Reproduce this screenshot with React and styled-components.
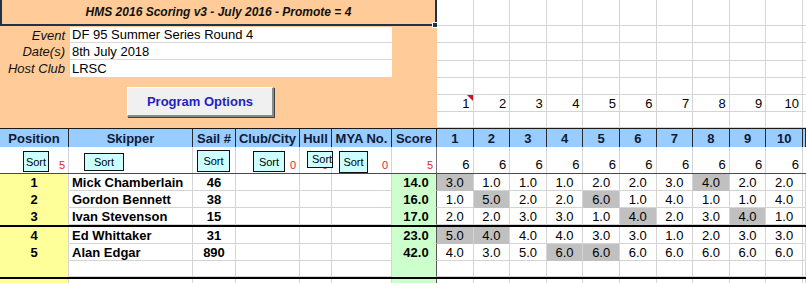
import React from 'react';
import styled, { createGlobalStyle } from 'styled-components';

const GlobalStyle = createGlobalStyle`
  html, body { margin: 0; padding: 0; background: #fff; overflow: hidden; }
  body { font-family: "Liberation Sans", Arial, sans-serif; color: #000; }
  * { box-sizing: border-box; }
`;

const COLS = '69px 124px 43px 64px 32px 60px 45px repeat(10, 36.6px) 1fr';
const GRID = '#d4d4d4';

const Sheet = styled.div`
  width: 806px;
  height: 283px;
  overflow: hidden;
  position: relative;
`;

const Top = styled.div`
  display: flex;
  height: 128px;
`;

const Panel = styled.div`
  width: 437px;
  flex: none;
  background: #ffcc99;
  position: relative;
`;

const TitleBar = styled.div`
  height: 26px;
  width: 437px;
  border: 2px solid #1e3349;
  border-top: none;
  display: flex;
  align-items: center;
  justify-content: center;
  font-style: italic;
  font-weight: bold;
  font-size: 12px;
  color: #111;
  position: relative;
`;

const Handle = styled.span`
  position: absolute;
  right: -3px;
  bottom: -4px;
  width: 6px;
  height: 6px;
  background: #1e3349;
  border: 1px solid #fff;
`;

const Form = styled.div`
  display: grid;
  grid-template-columns: 70px 322px;
  margin-top: 1px;
`;

const Label = styled.div`
  height: ${p => p.$h}px;
  display: flex;
  align-items: center;
  justify-content: flex-end;
  padding-right: 5px;
  font-style: italic;
  font-size: 13px;
  color: #111;
`;

const Field = styled.div`
  height: ${p => p.$h}px;
  display: flex;
  align-items: center;
  padding-left: 2px;
  background: #fff;
  border-bottom: 1px solid ${p => (p.$last ? '#fff' : '#d8d8d8')};
  font-size: 13px;
`;

const ButtonRow = styled.div`
  display: flex;
  padding-left: 127px;
  margin-top: 10px;
`;

const OptionsButton = styled.div`
  width: 147px;
  height: 30px;
  background: #f0f0f0;
  border-top: 1px solid #fff;
  border-left: 1px solid #fff;
  border-right: 2px solid #8a8a8a;
  border-bottom: 2px solid #8a8a8a;
  box-shadow: 1px 1px 0 #404040;
  display: flex;
  align-items: center;
  justify-content: center;
  font-weight: bold;
  font-size: 13px;
  color: #1f1fc4;
`;

const TopGrid = styled.div`
  flex: 1;
  display: grid;
  grid-template-columns: repeat(10, 36.6px) 1fr;
  grid-template-rows: 26px 17px 18px 17px 17px 17px 16px;
`;

const GridCell = styled.div`
  border-right: 1px solid ${GRID};
  border-bottom: 1px solid ${GRID};
  display: flex;
  align-items: center;
  justify-content: flex-end;
  padding-right: 3px;
  font-size: 13px;
  position: relative;
`;

const Comment = styled.span`
  position: absolute;
  top: 0;
  right: 0;
  width: 0;
  height: 0;
  border-top: 6px solid #c8102e;
  border-left: 6px solid transparent;
`;

const Row = styled.div`
  display: grid;
  grid-template-columns: ${COLS};
  height: ${p => p.$h}px;
  border-top: ${p => (p.$top ? '1px solid #1a1a1a' : 'none')};
  border-bottom: ${p => p.$thick ? '2px solid #000' : p.$line ? `1px solid ${p.$line}` : 'none'};
  background: ${p => p.$bg || 'transparent'};
`;

const HeadCell = styled.div`
  border-right: 1px solid #2a2a2a;
  display: flex;
  align-items: center;
  justify-content: center;
  font-weight: bold;
  font-size: 13px;
  color: #0f1a36;
  white-space: nowrap;
  overflow: hidden;
`;

const SortCell = styled.div`
  position: relative;
  border-right: 1px solid ${p => p.$edge || GRID};
  display: flex;
  align-items: flex-end;
  justify-content: flex-end;
  padding-right: 3px;
  padding-bottom: 1px;
  font-size: 13px;
`;

const SortButton = styled.div`
  position: absolute;
  left: ${p => p.$x}px;
  top: ${p => p.$y}px;
  width: ${p => p.$w}px;
  height: ${p => p.$h}px;
  background: #ccffff;
  border: 1px solid #111;
  display: flex;
  align-items: ${p => (p.$clip ? 'flex-start' : 'center')};
  justify-content: ${p => (p.$clip ? 'flex-start' : 'center')};
  padding-left: ${p => (p.$clip ? 4 : 0)}px;
  padding-top: ${p => (p.$clip ? 1 : 0)}px;
  font-size: 11px;
  overflow: hidden;
  white-space: nowrap;
  z-index: 2;
`;

const Count = styled.span`
  font-size: 11px;
  color: #e0262b;
  line-height: 11px;
  padding-bottom: 1px;
`;

const Cell = styled.div`
  background: ${p => p.$bg || '#fff'};
  border-right: 1px solid ${p => p.$edge || GRID};
  border-bottom: 1px solid ${p => (p.$bg ? p.$bg : GRID)};
  display: flex;
  align-items: center;
  justify-content: ${p => p.$align || 'center'};
  padding-left: ${p => p.$pl || 0}px;
  font-size: 13px;
  font-weight: ${p => (p.$bold ? 'bold' : 'normal')};
  white-space: nowrap;
  overflow: hidden;
`;

const YELLOW = '#ffff99';
const GREEN = '#ccffcc';
const DISCARD = '#c0c0c0';

const headers = ['Position', 'Skipper', 'Sail #', 'Club/City', 'Hull', 'MYA No.', 'Score', '1', '2', '3', '4', '5', '6', '7', '8', '9', '10', ''];

const rows = [
  { pos: 1, name: 'Mick Chamberlain', sail: '46', score: '14.0', r: ['3.0', '1.0', '1.0', '1.0', '2.0', '2.0', '3.0', '4.0', '2.0', '2.0'], d: [0, 7] },
  { pos: 2, name: 'Gordon Bennett', sail: '38', score: '16.0', r: ['1.0', '5.0', '2.0', '2.0', '6.0', '1.0', '4.0', '1.0', '1.0', '4.0'], d: [1, 4] },
  { pos: 3, name: 'Ivan Stevenson', sail: '15', score: '17.0', r: ['2.0', '2.0', '3.0', '3.0', '1.0', '4.0', '2.0', '3.0', '4.0', '1.0'], d: [5, 8], thick: true },
  { pos: 4, name: 'Ed Whittaker', sail: '31', score: '23.0', r: ['5.0', '4.0', '4.0', '4.0', '3.0', '3.0', '1.0', '2.0', '3.0', '3.0'], d: [0, 1] },
  { pos: 5, name: 'Alan Edgar', sail: '890', score: '42.0', r: ['4.0', '3.0', '5.0', '6.0', '6.0', '6.0', '6.0', '6.0', '6.0', '6.0'], d: [3, 4] },
  { blank: true, thick: true },
  { blank: true },
];

const rowHeights = [17, 17, 19, 17, 17, 18, 17];

const sortButtons = [
  { x: 23, y: 4, w: 26, h: 21, count: '5' },
  { x: 15, y: 6, w: 40, h: 18 },
  { x: 4, y: 3, w: 33, h: 22 },
  { x: 17, y: 4, w: 32, h: 21, count: '0' },
  { x: 7, y: 4, w: 26, h: 17, count: '0', clip: true },
  { x: 7, y: 4, w: 29, h: 22, count: '0' },
  { count: '5' },
];

function DataRow({ row, h }) {
  const cells = [];
  if (row.blank) {
    cells.push(<Cell key="p" $bg={YELLOW} />);
    for (let i = 0; i < 5; i++) cells.push(<Cell key={'e' + i} />);
    cells.push(<Cell key="s" $bg={GREEN} $edge="#555" />);
    for (let i = 0; i < 11; i++) cells.push(<Cell key={'r' + i} />);
  } else {
    cells.push(<Cell key="p" $bg={YELLOW} $bold>{row.pos}</Cell>);
    cells.push(<Cell key="n" $bold $align="flex-start" $pl={3}>{row.name}</Cell>);
    cells.push(<Cell key="sa" $bold>{row.sail}</Cell>);
    cells.push(<Cell key="c" />);
    cells.push(<Cell key="h" />);
    cells.push(<Cell key="m" />);
    cells.push(<Cell key="s" $bg={GREEN} $edge="#555" $bold $pl={4}>{row.score}</Cell>);
    row.r.forEach((v, i) => (
      cells.push(<Cell key={'r' + i} $bg={row.d.includes(i) ? DISCARD : undefined}>{v}</Cell>)
    ));
    cells.push(<Cell key="x" />);
  }
  return <Row $h={h} $thick={row.thick}>{cells}</Row>;
}

export default function App() {
  const topCells = [];
  for (let r = 0; r < 7; r++) {
    for (let c = 0; c < 11; c++) {
      topCells.push(
        <GridCell key={`${r}-${c}`}>
          {r === 5 && c < 10 ? c + 1 : null}
          {r === 5 && c === 0 ? <Comment /> : null}
        </GridCell>
      );
    }
  }

  return (
    <Sheet>
      <GlobalStyle />
      <Top>
        <Panel>
          <TitleBar>
            HMS 2016 Scoring v3 - July 2016 - Promote = 4
            <Handle />
          </TitleBar>
          <Form>
            <Label $h={16}>Event</Label>
            <Field $h={16}>DF 95 Summer Series Round 4</Field>
            <Label $h={17}>Date(s)</Label>
            <Field $h={17}>8th July 2018</Field>
            <Label $h={17}>Host Club</Label>
            <Field $h={17} $last>LRSC</Field>
          </Form>
          <ButtonRow>
            <OptionsButton>Program Options</OptionsButton>
          </ButtonRow>
        </Panel>
        <TopGrid>{topCells}</TopGrid>
      </Top>

      <Row $h={19} $top $bg="#99ccff">
        {headers.map((h, i) => <HeadCell key={i}>{h}</HeadCell>)}
      </Row>

      <Row $h={27} $line="#4a4a4a">
        {sortButtons.map((b, i) => (
          <SortCell key={i} $edge={i === 6 ? '#777' : undefined}>
            {b.w ? (
              <SortButton $x={b.x} $y={b.y} $w={b.w} $h={b.h} $clip={b.clip}>Sort</SortButton>
            ) : null}
            {b.count ? <Count>{b.count}</Count> : null}
          </SortCell>
        ))}
        {Array.from({ length: 10 }).map((_, i) => (
          <SortCell key={'r' + i}>6</SortCell>
        ))}
        <SortCell />
      </Row>

      {rows.map((row, i) => <DataRow key={i} row={row} h={rowHeights[i]} />)}
    </Sheet>
  );
}
